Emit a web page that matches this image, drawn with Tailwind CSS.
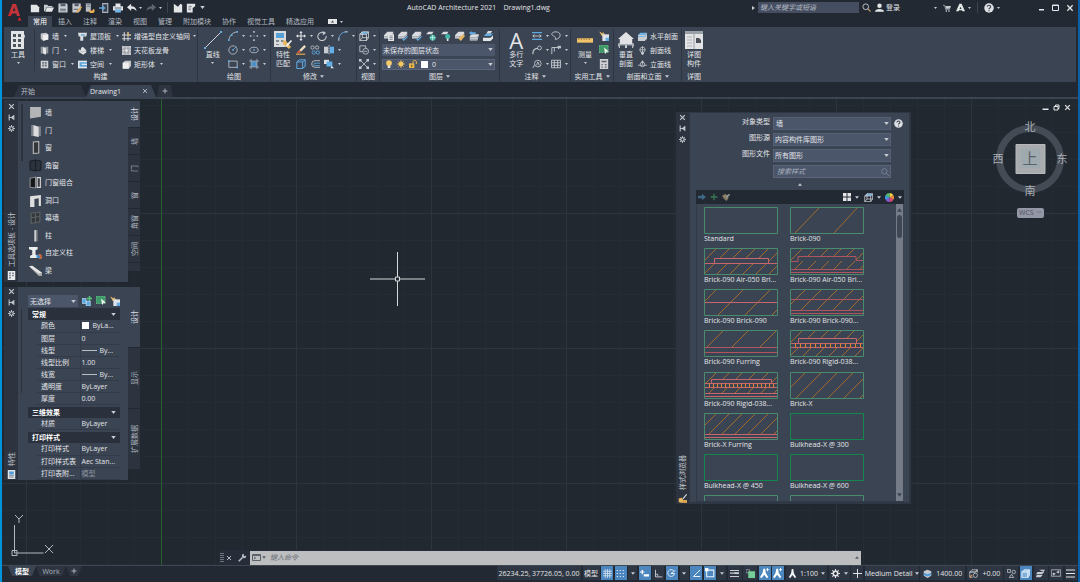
<!DOCTYPE html>
<html lang="zh-CN">
<head>
  <meta charset="UTF-8" />
  <meta name="viewport" content="width=device-width, initial-scale=1.0" />
  <title>AutoCAD Architecture 2021 - Drawing1.dwg</title>
  <script src="https://cdn.jsdelivr.net/npm/@tailwindcss/browser@4"></script>
</head>
<body class="h-screen flex flex-col overflow-hidden bg-[#222933] border-l-2 border-r-2 border-l-[#0094dc] border-r-[#0b5fa5] text-[7px] leading-[9px] text-[#e3e5e8] font-['Open_Sans','Noto_Sans_CJK_SC',sans-serif]">

  <!-- Icon sprite (kept rendered at zero size so the hatch patterns stay usable) -->
  <svg class="absolute w-0 h-0" aria-hidden="true">
    <symbol id="caret" viewBox="0 0 6 4"><path d="M0 0h6L3 4z" fill="#c9cdd3"/></symbol>
    <symbol id="x" viewBox="0 0 12 12"><path d="M2 2l8 8M10 2l-8 8" stroke="currentColor" stroke-width="2"/></symbol>
    <symbol id="plus" viewBox="0 0 12 12"><path d="M6 1v10M1 6h10" stroke="currentColor" stroke-width="2"/></symbol>
    <symbol id="pin" viewBox="0 0 12 12"><path d="M2 1v10M2 6h4M10 3L6 6l4 3z" stroke="currentColor" stroke-width="1.8" fill="currentColor"/></symbol>
    <symbol id="gear" viewBox="0 0 12 12"><path d="M6 0v12M0 6h12M1.8 1.8l8.4 8.4M10.2 1.8l-8.4 8.4" stroke="currentColor" stroke-width="1.6"/><circle cx="6" cy="6" r="3" fill="#2d3440" stroke="currentColor" stroke-width="2"/></symbol>
    <symbol id="help" viewBox="0 0 12 12"><circle cx="6" cy="6" r="5.7" fill="#dfe1e4"/><path d="M4 4.6C4 2 8 2 8 4.6 8 6 6 6 6 7.4M6 8.6v1.4" stroke="#3b4453" stroke-width="1.4" fill="none"/></symbol>
    <symbol id="search" viewBox="0 0 12 12"><circle cx="5" cy="5" r="3.8" fill="none" stroke="currentColor" stroke-width="1.2"/><path d="M8 8l3.4 3.4" stroke="#c9a36a" stroke-width="1.5"/></symbol>
    <symbol id="new" viewBox="0 0 12 12"><path d="M1 2h7l3 3v6H1z" fill="#e3e5e7"/></symbol>
    <symbol id="open" viewBox="0 0 12 12"><path d="M0 2h4l1 1.5h5V5H3L1 10H0z" fill="#c9ccd0"/><path d="M3.4 5.5H12L9.6 10.5H1.4z" fill="#e3e5e7"/></symbol>
    <symbol id="save" viewBox="0 0 12 12"><path d="M.5.5h10L11.500 2v9.500H.5z" fill="#c8ccd0"/><path d="M3 .5h6V4H3zM2.500 7h7v1h-7zM2.500 9h7v1h-7z" fill="#565f6d"/></symbol>
    <symbol id="saveas" viewBox="0 0 12 12"><path d="M.5.5h10v8L8 11.500H.5z" fill="#c8ccd0"/><path d="M3 .5h5V4H3zM2 7h5v1H2z" fill="#565f6d"/><path d="M11 4l1 1.500L7 11l-2 .6.6-2z" fill="#e2a54d"/></symbol>
    <symbol id="webopen" viewBox="0 0 12 12"><path d="M1 .5h6v10H1z" fill="#b8bcc2"/><path d="M2 2h4M2 4h4" stroke="#6b7380"/><path d="M4 9h5l1-2 1.500 1v2.500L10 12H6z" fill="#e7ae54"/></symbol>
    <symbol id="phone" viewBox="0 0 12 12"><path d="M4.500 .7h6v10.600h-6z" fill="#38424f" stroke="#a9b4c1" stroke-width="1.400"/><path d="M0 5h4V3l4 3-4 3V7H0z" fill="#5fa7dc"/></symbol>
    <symbol id="print" viewBox="0 0 12 12"><path d="M3 .5h6V4H3zM0 4h12v5H0z" fill="#e3e5e7"/><path d="M2 6h8" stroke="#4a535f"/><path d="M2.500 7.500h7v4h-7z" fill="#73b4e4"/></symbol>
    <symbol id="undo" viewBox="0 0 12 12"><path d="M0 5l5-4v3c4 0 6 2 6.500 6C9.500 7.500 8 7 5 7v2.500z" fill="currentColor"/></symbol>
    <symbol id="flagdoc" viewBox="0 0 12 12"><path d="M1 1l5 3.500L9 1l2 1v9.500H1z" fill="#e3e5e7"/></symbol>
    <symbol id="sheet" viewBox="0 0 12 12"><path d="M1 1h10v3L8 6v5.500H1z" fill="#e3e5e7"/><path d="M3 4h4M3 6h3M3 8h3" stroke="#6a7380"/></symbol>
    <symbol id="user" viewBox="0 0 12 12"><circle cx="6" cy="3.500" r="3" fill="#e3e5e7"/><path d="M0 11.500C0 7 12 7 12 11.500z" fill="#e3e5e7"/></symbol>
    <symbol id="cart" viewBox="0 0 12 12"><path d="M0 2h2.500L4 8h6" stroke="#c6cace" fill="none"/><path d="M3.500 3H12l-1.500 4h-6z" fill="#c6cace"/><path d="M4 9.500h2v2H4zM8 9.500h2v2H8z" fill="#c6cace"/></symbol>
    <symbol id="adsk" viewBox="0 0 12 12"><path d="M4.500 1h3L12 11H8.500L6 5 3.500 11H0zM3 8h6v1.500H3z" fill="#e3e5e7"/></symbol>

    <symbol id="toolbox" viewBox="0 0 14 18"><path d="M0 0h13v3l1 2-1 3v10H0z" fill="#e3e4e5"/><path d="M2 3h3v3H2zM7 3h3v3H7zM2 8h3v3H2zM7 8h3v3H7zM2 13h3v3H2zM7 13h3v3H7z" fill="#4b535f"/></symbol>
    <symbol id="wall" viewBox="0 0 12 12"><path d="M1 2l7-1 3 2v7l-7 1.500L1 9z" fill="#c4c6c9"/><path d="M4 4l7-1v7l-7 1.500z" fill="#efefef"/></symbol>
    <symbol id="door" viewBox="0 0 12 12"><path d="M1 1h10v9H7V2.500H4V10H1z" fill="#8f969e"/><path d="M4 1.500l4 1.500v8.500L4 10z" fill="#e4e4e4"/></symbol>
    <symbol id="window" viewBox="0 0 12 12"><path d="M1 1h10v10H1z" fill="#d0d2d5"/><path d="M3 2.500h2.500V5H3zM6.500 2.500H9V5H6.500zM3 6h2.500v2.500H3zM6.500 6H9v2.500H6.500z" fill="#68717e"/></symbol>
    <symbol id="palette" viewBox="0 0 12 12"><path d="M1 0h10v12H1z" fill="#e9eaec"/><path d="M3 2h2v2H3zM7 2h2v2H7zM3 5h2v2H3zM7 5h2v2H7zM3 8h2v2H3z" fill="#68717e"/></symbol>
    <symbol id="props" viewBox="0 0 12 12"><path d="M1 0h10v12H1z" fill="#dfe1e4"/><path d="M3 2h6v4H3z" fill="#4c9bd8"/><path d="M3 7.500h6M3 9.500h6" stroke="#68717e"/></symbol>
    <symbol id="roof" viewBox="0 0 12 12"><path d="M0 1h12l-1 5H7v5.500H3V6H1z" fill="#dcdde0"/><path d="M4 3h5v2H4z" fill="#63a8da"/></symbol>
    <symbol id="stair" viewBox="0 0 12 12"><path d="M1 5h3V2.500L6.500 1 11 5.500v3L7 11.500 1 8z" fill="#e0e1e3"/><path d="M1 5l5 3 5-2" stroke="#a7acb3" fill="none"/></symbol>
    <symbol id="space" viewBox="0 0 12 12"><path d="M0 1h12v10H0z" fill="#5ba6e0"/><path d="M0 1h12v2H0zM0 9h12v2H0zM0 3h2v6H0zM5 5h7v1.500H5z" fill="#e2e4e6"/></symbol>
    <symbol id="grid3" viewBox="0 0 12 12"><path d="M3 0v12M8 0v12M0 4h12M0 9h12" stroke="#d8dadd" stroke-width="1.300"/><path d="M8 0v4h4" stroke="#e2b35c" stroke-width="1.400" fill="none"/></symbol>
    <symbol id="ceiling" viewBox="0 0 12 12"><path d="M0 0h12v12H0z" fill="#c6c8cb"/><path d="M4 0v12M8 0v12M0 4h12M0 8h12" stroke="#8d939b"/><path d="M4.500 4.500h3v3h-3z" fill="#eee"/></symbol>
    <symbol id="box" viewBox="0 0 12 12"><path d="M1 3.500L4 1h8v7l-3 3.500H1z" fill="#c4c6c9"/><path d="M1 3.500h8v8H1z" fill="#f0f0f0"/></symbol>

    <symbol id="line" viewBox="0 0 18 18"><path d="M1 17L17 1" stroke="#d1d4d8"/><path d="M0 16h2v2H0zM16 0h2v2h-2z" fill="#62aee6"/></symbol>
    <symbol id="arc" viewBox="0 0 12 12"><path d="M1 11C2 5 5 2 11 1" stroke="#bfc4ca" fill="none"/><path d="M0 10h2v2H0zM10 0h2v2h-2zM3.500 4h2v2h-2z" fill="#62aee6"/></symbol>
    <symbol id="circle" viewBox="0 0 12 12"><circle cx="6" cy="6" r="5" stroke="#bfc4ca" fill="none"/><path d="M6 6l4-4" stroke="#62aee6"/><path d="M5 5h2v2H5z" fill="#62aee6"/></symbol>
    <symbol id="rect" viewBox="0 0 12 12"><path d="M1 2.500h10v7.500H1z" stroke="#bfc4ca" fill="none"/><path d="M0 1.500h2v2H0zM10 9h2v2h-2z" fill="#62aee6"/></symbol>
    <symbol id="points" viewBox="0 0 12 12"><path d="M5 0h2v2H5zM1 5h2v2H1zM9 5h2v2H9zM5 10h2v2H5zM5.500 5.500h1v1h-1z" fill="#b5bbc3"/></symbol>
    <symbol id="ellipse" viewBox="0 0 12 12"><ellipse cx="6" cy="6" rx="5" ry="3.300" stroke="#bfc4ca" fill="none"/><path d="M5 5h2v2H5z" fill="#62aee6"/></symbol>
    <symbol id="hatch" viewBox="0 0 12 12"><path d="M2.500 2.500h7v7h-7z" fill="#4d91c8"/><path d="M2.500 0v12M9.500 0v12M0 2.500h12M0 9.500h12" stroke="#a7b0bb"/></symbol>
    <symbol id="match" viewBox="0 0 18 18"><path d="M0 0h12v16H0z" fill="#dadbdd"/><path d="M2 2h8v5H2z" fill="#56a0d8"/><path d="M2 9h3v2H2zM2 13h3v1H2zM7 9h3v2H7z" fill="#7f8791"/><path d="M9 9l3 1 5 6-2 2-6-5z" fill="#e6b65f"/><path d="M12 14l5-5 1 1-5 6z" fill="#f2f2f2"/></symbol>
    <symbol id="move" viewBox="0 0 12 12"><path d="M6 1v10M1 6h10" stroke="#e1e3e6" stroke-width="1.300"/><path d="M6 0l2 2.500H4zM6 12l2-2.500H4zM0 6l2.500-2v4zM12 6L9.500 4v4z" fill="#e1e3e6"/></symbol>
    <symbol id="rotate" viewBox="0 0 12 12"><path d="M9 2.500A5 5 0 1 0 11 6" stroke="#c7cbd1" stroke-width="1.300" fill="none"/><path d="M7 0l4 2.500L7 5z" fill="#c7cbd1"/></symbol>
    <symbol id="fillet" viewBox="0 0 12 12"><path d="M1 11C1 5 4 1 11 1" stroke="#62aee6" fill="none"/><path d="M8 1h4M1 8v4" stroke="#c7cbd1"/></symbol>
    <symbol id="erase" viewBox="0 0 12 12"><path d="M10 0l2 2-6 6-2-2z" fill="#e9dcc1"/><path d="M4 6l2 2-3 2-2-1z" fill="#e05c44"/><path d="M0 11h11" stroke="#e2a54d" stroke-width="1.500"/></symbol>
    <symbol id="copy" viewBox="0 0 12 12"><circle cx="3" cy="3" r="2" stroke="#c0c5cb" fill="none"/><circle cx="8.500" cy="3" r="2" stroke="#c0c5cb" fill="none"/><circle cx="4.500" cy="9" r="2" stroke="#62aee6" fill="none"/><circle cx="9.500" cy="9" r="2" stroke="#62aee6" fill="none"/></symbol>
    <symbol id="mirror" viewBox="0 0 12 12"><path d="M0 2h5v8H0z" fill="#c9ccd1"/><path d="M7 2h5v8H7z" fill="#62aee6"/><path d="M6 0v12" stroke="#dfe1e4" stroke-dasharray="2 1"/></symbol>
    <symbol id="stretch" viewBox="0 0 12 12"><path d="M1 3.500h7v8H1zM4 1h7v8l-3 2M1 3.500L4 1M8 3.500L11 1" stroke="#62aee6" fill="none" stroke-width="1.200"/></symbol>
    <symbol id="offset" viewBox="0 0 12 12"><path d="M12 2H6a4 4 0 0 0 0 8h6" stroke="#c7cbd1" fill="none"/><path d="M12 5H6a1.500 1.500 0 0 0 0 3h6" stroke="#62aee6" fill="none"/></symbol>
    <symbol id="scale" viewBox="0 0 12 12"><path d="M0 1h6v5H0z" fill="#dfe1e4"/><path d="M3 3h7v6H3z" fill="#62aee6"/><path d="M9 8l3 3H8z" fill="#dfe1e4"/></symbol>
    <symbol id="cube" viewBox="0 0 12 12"><path d="M1 4l3-3h7.500L9 4z" fill="#5ba6de"/><path d="M1 4h8v7.500H1zM1 4l3-3h7.500v7L9 11.500M9 4l2.500-3M4 1v7h7.500M4 8l-3 3.500" stroke="#d3d6da" fill="none"/></symbol>
    <symbol id="shapes" viewBox="0 0 12 12"><path d="M1 1h7v7H1z" stroke="#c7cbd1" fill="none"/><circle cx="8" cy="7.500" r="3.500" stroke="#c7cbd1" fill="#3b4453"/><path d="M6 7.500h4" stroke="#c7cbd1"/></symbol>
    <symbol id="nodes" viewBox="0 0 12 12"><path d="M2 2l8 8M10 2l-8 8" stroke="#c7cbd1"/><path d="M0 0h3v3H0zM9 0h3v3H9zM0 9h3v3H0zM9 9h3v3H9z" fill="#c7cbd1"/></symbol>
    <symbol id="layer" viewBox="0 0 12 12"><path d="M0 5l4-4h7l-3 4zM0 5v4h7l4-4V1L8 5z" fill="#dadcdf"/><path d="M0 7h8l3-4" stroke="#8d959f" fill="none"/></symbol>
    <symbol id="lyprops" viewBox="0 0 12 12"><use href="#layer"/><path d="M5 4h7v8H5z" fill="#e9eaec"/><path d="M6.500 6h4M6.500 8h4M6.500 10h4" stroke="#6d7682"/></symbol>
    <symbol id="lycur" viewBox="0 0 12 12"><use href="#layer"/><path d="M5 10l2 2 5-5-1-1-4 4-1-1z" fill="#62aee6"/></symbol>
    <symbol id="lyfrz" viewBox="0 0 12 12"><path d="M0 4l3-3h6L7 4z" fill="#dadcdf"/><circle cx="8" cy="8" r="3.500" fill="#43b7a5"/><path d="M8 4.500v7M4.500 8h7" stroke="#cdeee8"/></symbol>
    <symbol id="lyoff" viewBox="0 0 12 12"><path d="M0 4l3-3h6L7 4z" fill="#dadcdf"/><circle cx="8" cy="6.500" r="3" fill="#43b7a5"/><path d="M7 9h2v3H7z" fill="#e3e5e7"/></symbol>
    <symbol id="lyiso" viewBox="0 0 12 12"><use href="#layer"/><path d="M4 9l6-5 2 2-5 6z" fill="#e6b65f"/></symbol>
    <symbol id="lyprev" viewBox="0 0 12 12"><path d="M1 6l2-2h9l-2 7.500H1z" fill="#dadcdf"/><path d="M1 8h9l1-2M1 10h9" stroke="#8d959f" fill="none"/><path d="M0 2.500L3 0v1.500h5v2H3V5z" fill="#62aee6"/></symbol>
    <symbol id="lystack" viewBox="0 0 12 12"><path d="M0 8h9l3-3v4l-3 3H0z" fill="#e3e5e7"/><path d="M1 6l3-3h8L9 6z" fill="#62aee6"/><path d="M4 3l2-3h5l-2 3z" fill="#dadcdf"/></symbol>
    <symbol id="bulb" viewBox="0 0 12 12"><circle cx="6" cy="4.500" r="4.300" fill="#f5c964"/><path d="M4 8h4v4H4z" fill="#e9e4d6"/></symbol>
    <symbol id="sun" viewBox="0 0 12 12"><path d="M6 0v12M0 6h12M2 2l8 8M10 2l-8 8" stroke="#edb94e" stroke-width="1.300"/><circle cx="6" cy="6" r="3.600" fill="#f5c964"/></symbol>
    <symbol id="lock" viewBox="0 0 12 12"><path d="M0 5h8v7H0z" fill="#edb94e"/><path d="M6 5V2.500C6 0 11 0 11 2.500V6" stroke="#edb94e" stroke-width="1.500" fill="none"/><path d="M3 7h2v3H3z" fill="#6f5a2c"/></symbol>
    <symbol id="dim" viewBox="0 0 12 12"><path d="M0 2h12M0 10h12" stroke="#5ea9df" stroke-width="1.500"/><path d="M1 6h10M3 4L1 6l2 2M9 4l2 2-2 2" stroke="#d6d9dd" fill="none"/></symbol>
    <symbol id="leader" viewBox="0 0 12 12"><path d="M1 11C1 6 3 4 7 4" stroke="#c9cdd2" fill="none" stroke-width="1.300"/><circle cx="9" cy="3.500" r="2.300" stroke="#c9cdd2" fill="none"/></symbol>
    <symbol id="tag" viewBox="0 0 12 12"><path d="M1 11l2-4" stroke="#c9cdd2"/><circle cx="7" cy="5.500" r="4" stroke="#c9cdd2" fill="none"/><path d="M5.500 7.500L7 3.500l1.500 4" stroke="#c9cdd2" fill="none"/></symbol>
    <symbol id="cloud" viewBox="0 0 12 12"><path d="M2 2c3-2 9-1 9 3 0 3-3 5-6 5 1-2 0-3-2-4C1 5 0 3 2 2z" stroke="#b9bfc7" fill="none" stroke-width="1.200"/></symbol>
    <symbol id="elev" viewBox="0 0 12 12"><path d="M1 11V3h10M4 3v5M9 1v4" stroke="#b9bfc7" fill="none" stroke-width="1.200"/><path d="M8 1h4v3H8z" fill="#b9bfc7"/></symbol>
    <symbol id="table" viewBox="0 0 12 12"><path d="M.5 1.500h11v9H.5zM.5 4.500h11M.5 7.500h11M4 1.500v9M8 1.500v9" stroke="#d3d6da" fill="none"/></symbol>
    <symbol id="ruler" viewBox="0 0 18 18"><path d="M0 7h18v5H0z" fill="#f0c46a"/><path d="M2 7v2M5 7v2M8 7v2M11 7v2M14 7v2" stroke="#98753a"/></symbol>
    <symbol id="paste" viewBox="0 0 12 12"><path d="M1 1l3 5 1-4 2 3" fill="#f0c46a" stroke="#f0c46a"/><path d="M4 4h8v8H4z" fill="#dfe2e6"/><path d="M8 8h4v4H8z" fill="#62aee6"/></symbol>
    <symbol id="qsel" viewBox="0 0 12 12"><path d="M0 0h11v9H0z" fill="#3d9a68"/><path d="M0 0h11v9H0z" fill="none" stroke="#8bd0a5" stroke-dasharray="1 1"/><path d="M6 3l6 5H9l-1.500 3z" fill="#f4f4f4"/></symbol>
    <symbol id="calc" viewBox="0 0 12 12"><path d="M1 0h10v12H1z" fill="#cfd1d4"/><path d="M3 2h6v2H3zM3 6h1.500v1.500H3zM7 6h2v1.500H7zM3 9h1.500v1.500H3zM7 9h2v1.500H7z" fill="#59626e"/></symbol>
    <symbol id="house" viewBox="0 0 18 18"><path d="M9 0l9 8h-2v5h2v3h-1v2h-1v-3h-6v3H8v-3H2v3H1v-2H0v-3h2V8H0z" fill="#e1e2e4"/><path d="M0 14.500h18" stroke="#7b838e"/></symbol>
    <symbol id="hsec" viewBox="0 0 12 12"><path d="M0 4l3-3h9L9 4z" fill="#6bb3e6"/><path d="M0 4h9v8H0zM9 4l3-3v8l-3 3z" fill="#c9ccd0"/><path d="M0 6h9l3-3" stroke="#62aee6" fill="none"/></symbol>
    <symbol id="secline" viewBox="0 0 12 12"><circle cx="6" cy="5" r="3.500" stroke="#c9cdd2" fill="none"/><path d="M6 0v10M2 5h8M4 9h4l-2 3z" stroke="#c9cdd2" fill="#c9cdd2"/></symbol>
    <symbol id="elevline" viewBox="0 0 12 12"><circle cx="6" cy="6" r="3" stroke="#c9cdd2" fill="none"/><path d="M0 7h12M6 1v5M4 4l2-3 2 3" stroke="#c9cdd2" fill="none"/></symbol>
    <symbol id="detail" viewBox="0 0 18 18"><path d="M0 0h18v18H0z" fill="#e2e3e4"/><path d="M0 0h18v3H0z" fill="#9aa0a7"/><path d="M9 3v15" stroke="#9aa0a7"/><path d="M2 6h5M2 9h5M2 12h5M2 15h5" stroke="#b1b5ba"/><path d="M11 7h3l2 2v3h-5z" fill="#4b5058"/></symbol>
    <symbol id="addsel" viewBox="0 0 12 12"><path d="M0 3h5v6H0zM5 6h5v6H5z" fill="#5ea9df" stroke="#cfe4f4" stroke-width=".7"/><path d="M9 0v6M6 3h6" stroke="#57c77c" stroke-width="1.800"/></symbol>
    <symbol id="wrench" viewBox="0 0 12 12"><path d="M1 11l5-5" stroke="currentColor" stroke-width="2.200"/><path d="M11 3.500A3 3 0 1 1 7.500 1L8 4z" fill="currentColor"/></symbol>
    <symbol id="arrow" viewBox="0 0 12 12"><path d="M0 4h6V1l6 5-6 5V8H0z" fill="#3f6788"/></symbol>
    <symbol id="brush" viewBox="0 0 12 12"><path d="M0 4l5-3 5 6-3 5-4-3z" fill="#857a61"/><path d="M5 5l6-4 1 2-5 5z" fill="#9a9a94"/></symbol>
    <symbol id="broom" viewBox="0 0 12 12"><path d="M11 0l1 1-5 6-1-1z" fill="#e3e5e7"/><path d="M1 6l4-1 3 4-2 3-5-1z" fill="#e6b65f"/><path d="M7 8h5v4H7z" fill="#d9a24e"/></symbol>
    <symbol id="tiles" viewBox="0 0 12 12"><path d="M0 0h5.300v5.300H0zM6.700 0H12v5.300H6.700zM0 6.700h5.300V12H0zM6.700 6.700H12V12H6.700z" fill="#e3e5e7"/></symbol>
    <symbol id="wheel" viewBox="0 0 12 12"><path d="M6 6V0a6 6 0 0 1 5.200 3z" fill="#f3d64b"/><path d="M6 6l5.200-3a6 6 0 0 1 0 6z" fill="#ee8a3c"/><path d="M6 6l5.200 3A6 6 0 0 1 6 12z" fill="#e2487f"/><path d="M6 6v6A6 6 0 0 1 .8 9z" fill="#8a5bd6"/><path d="M6 6L.8 9a6 6 0 0 1 0-6z" fill="#3fa0ea"/><path d="M6 6L.8 3A6 6 0 0 1 6 0z" fill="#56c46c"/></symbol>

    <symbol id="hash" viewBox="0 0 12 12"><path d="M3 0v12M6 0v12M9 0v12M0 3h12M0 6h12M0 9h12" stroke="#e9f0f7" stroke-width=".9"/></symbol>
    <symbol id="dots" viewBox="0 0 12 12"><path d="M1 2h10M1 6h10M1 10h10" stroke="#e9f0f7" stroke-width="1.500" stroke-dasharray="1.500 2.500"/></symbol>
    <symbol id="dyn" viewBox="0 0 12 12"><path d="M0 4h6M3 1v6" stroke="#fff" stroke-width="1.600"/><path d="M5 7h7v3H5z" fill="#fff"/></symbol>
    <symbol id="ortho" viewBox="0 0 12 12"><path d="M2 1v9.500h9M2 7h3v3" stroke="#c9cdd2" fill="none" stroke-width="1.200"/></symbol>
    <symbol id="polar" viewBox="0 0 12 12"><path d="M9 2.500A4.500 4.500 0 1 0 10 6H5M5 6l6-4" stroke="#eaf2f9" fill="none" stroke-width="1.200"/></symbol>
    <symbol id="otrack" viewBox="0 0 12 12"><path d="M11 1L2 10h9" stroke="#eaf2f9" fill="none" stroke-width="1.300"/></symbol>
    <symbol id="osnap" viewBox="0 0 12 12"><path d="M2 2.500h8.500v8H2z" stroke="#eaf2f9" fill="none" stroke-width="1.300"/><path d="M0 0h4v4H0z" fill="#fff"/></symbol>
    <symbol id="lwt" viewBox="0 0 12 12"><path d="M0 2h12M0 5.500h8M0 10h12" stroke="#c9cdd2" stroke-width="1.500"/><path d="M6 5.500h6" stroke="#c9cdd2" stroke-width="2.500"/></symbol>
    <symbol id="cycle" viewBox="0 0 12 12"><path d="M0 1h5v4H0z" fill="none" stroke="#9aa5b1"/><path d="M3 3h9v9H3z" fill="#74cf97"/></symbol>
    <symbol id="ann" viewBox="0 0 12 12"><path d="M5 0h2l1 6 3 5-2 1-3-4-3 4-2-1 3-5z" fill="#f1f4f7"/></symbol>
    <symbol id="annstar" viewBox="0 0 12 12"><path d="M4 1h2l1 5 3 5-2 1-3-4-3 4-2-1 3-5z" fill="#fff"/><path d="M9 0v4M7 2h4" stroke="#fff"/></symbol>
    <symbol id="db" viewBox="0 0 12 12"><path d="M1 3l5-2 5 2v6l-5 3-5-3z" fill="#c7ccd2"/><path d="M1 5l5 2 5-2v3l-5 2-5-2z" fill="#4c9bd8"/></symbol>
    <symbol id="surf" viewBox="0 0 12 12"><path d="M1 4l3-3h7L9 4zM9 4h-8v7h4M9 4l2-3v4" stroke="#c9cdd2" fill="none"/><circle cx="8.500" cy="8.500" r="2.800" stroke="#c9cdd2" fill="none"/><path d="M1 11l3-3" stroke="#e08a4d" stroke-width="1.500"/></symbol>
    <symbol id="filter" viewBox="0 0 12 12"><circle cx="9" cy="4" r="2.300" stroke="#c9cdd2" fill="none"/><path d="M.5.5h4v4h-4zM3 11.500h6L6 7z" stroke="#c9cdd2" fill="none"/></symbol>
    <symbol id="solid" viewBox="0 0 12 12"><path d="M1 4h8v7.500H1zM1 4l3-3h7.500v7L9 11.500M9 4l2.500-3" fill="#a9cdec" stroke="#eef5fb"/><path d="M3 5v6M5 5v6M7 5v6" stroke="#5b93c6"/></symbol>
    <symbol id="iso" viewBox="0 0 12 12"><path d="M2 4h9L8 7H0zM4 1h8l-2 3M1 8h8l-3 3H0z" fill="#c9cdd2"/></symbol>
    <symbol id="full" viewBox="0 0 14 12"><path d="M.5 1.500h13v9H.5z" stroke="#c9cdd2" fill="none"/><path d="M8 5l3-2v3zM6 7L3 9V6z" fill="#c9cdd2" stroke="#c9cdd2"/></symbol>

    <!-- wall hatches -->
    <pattern id="h13" width="13" height="13" patternUnits="userSpaceOnUse"><path d="M-1 14L14 -1M-1 1L1 -1M12 14L14 12" stroke="#a3692f"/></pattern>
    <pattern id="h16" width="16" height="16" patternUnits="userSpaceOnUse"><path d="M-1 17L17 -1M-1 1L1 -1M15 17L17 15" stroke="#a3692f"/></pattern>
    <pattern id="h27" width="27" height="27" patternUnits="userSpaceOnUse" x="13"><path d="M-1 28L28 -1M-1 1L1 -1M26 28L28 26" stroke="#a3692f"/></pattern>
    <symbol id="thumb" viewBox="0 0 74 27"><path d="M.5.5h73v26H.5z" fill="none" stroke="#4a8a6d"/></symbol>
    <symbol id="thumbg" viewBox="0 0 74 27"><path d="M.5.5h73v26H.5z" fill="none" stroke="#14874d"/></symbol>
  </svg>

  <!-- Title bar and ribbon tabs -->
  <header class="flex h-[27px] shrink-0">
    <button aria-label="应用程序菜单" class="w-[26px] flex justify-center pt-[3px]">
      <svg class="w-[14px] h-[18px]" viewBox="0 0 14 18"><path d="M4.500 1h3.500l4 12H9l-.9-2.600H4L3 13H0zM4.800 8h2.600L6.200 4z" fill="#c3343b"/><path d="M0 13l3-4v4zM9.500 17.500h4L11.500 14z" fill="#d3222c"/></svg>
    </button>
    <div class="flex-1 flex flex-col">
      <div class="flex items-center h-[15px]">
        <div class="flex items-center justify-between w-[107px] ml-[2px]">
          <button aria-label="新建"><svg class="size-[10px]"><use href="#new"/></svg></button>
          <button aria-label="打开"><svg class="size-[10px]"><use href="#open"/></svg></button>
          <button aria-label="保存"><svg class="size-[10px]"><use href="#save"/></svg></button>
          <button aria-label="另存为"><svg class="size-[10px]"><use href="#saveas"/></svg></button>
          <button aria-label="从 Web 打开"><svg class="size-[10px]"><use href="#webopen"/></svg></button>
          <button aria-label="保存到移动设备"><svg class="size-[10px]"><use href="#phone"/></svg></button>
          <button aria-label="打印"><svg class="size-[10px]"><use href="#print"/></svg></button>
          <button aria-label="放弃"><svg class="size-[10px]"><use href="#undo"/></svg></button>
        </div>
        <svg class="w-[3px] h-[2px] ml-[2px]"><use href="#caret"/></svg>
        <button aria-label="重做" class="ml-[4px] text-[#5d6672]"><svg class="size-[10px] -scale-x-100"><use href="#undo"/></svg></button>
        <svg class="w-[3px] h-[2px] ml-[3px]"><use href="#caret"/></svg>
        <span class="w-px h-[11px] bg-[#3c4552] ml-[5px]"></span>
        <button aria-label="项目浏览器" class="ml-[5px]"><svg class="size-[10px]"><use href="#flagdoc"/></svg></button>
        <button aria-label="图纸集" class="ml-[3px]"><svg class="size-[10px]"><use href="#sheet"/></svg></button>
        <svg class="w-[5px] h-[3px] ml-[4px]"><use href="#caret"/></svg>
        <h1 class="flex-1 text-center whitespace-pre">AutoCAD Architecture 2021    Drawing1.dwg</h1>
        <svg class="w-[3px] h-[4px] mr-[3px]" viewBox="0 0 3 4"><path d="M0 0v4l3-2z" fill="#c9cdd3"/></svg>
        <input type="text" aria-label="搜索" placeholder="键入关键字或短语" class="w-[101px] h-[11px] bg-[#454e60] px-[2px] italic placeholder:text-[#b4bac4] outline-none" />
        <button aria-label="搜索" class="ml-[3px] text-[#c9cdd3]"><svg class="size-[9px]"><use href="#search"/></svg></button>
        <button class="flex items-center gap-[2px] ml-[4px]"><svg class="size-[9px]"><use href="#user"/></svg>登录</button>
        <svg class="w-[3px] h-[2px] ml-[34px]"><use href="#caret"/></svg>
        <button aria-label="应用商店" class="ml-[6px]"><svg class="size-[8px]"><use href="#cart"/></svg></button>
        <button aria-label="Autodesk" class="ml-[5px]"><svg class="size-[9px]"><use href="#adsk"/></svg></button>
        <svg class="w-[3px] h-[2px] ml-[3px]"><use href="#caret"/></svg>
        <span class="w-px h-[11px] bg-[#3c4552] ml-[6px]"></span>
        <button aria-label="帮助" class="ml-[6px]"><svg class="size-[10px]"><use href="#help"/></svg></button>
        <svg class="w-[3px] h-[2px] ml-[3px]"><use href="#caret"/></svg>
        <div class="flex items-center gap-[7px] ml-[38px] mr-[4px] text-[#e3e5e7]">
          <button aria-label="最小化"><svg class="size-[7px]" viewBox="0 0 7 7"><path d="M1 5h5v1.500H1z" fill="currentColor"/></svg></button>
          <button aria-label="最大化"><svg class="size-[7px]" viewBox="0 0 7 7"><path d="M.5 1h6v5.500h-6zM.5 1.500h6" stroke="currentColor" fill="none"/></svg></button>
          <button aria-label="关闭"><svg class="size-[8px]"><use href="#x"/></svg></button>
        </div>
      </div>
      <nav class="flex items-end gap-px h-[12px] text-[#b3b9c1]">
        <button class="h-[11px] px-[5px] bg-[#3b4453] text-white">常用</button>
        <button class="h-[11px] px-[5px]">插入</button>
        <button class="h-[11px] px-[5px]">注释</button>
        <button class="h-[11px] px-[5px]">渲染</button>
        <button class="h-[11px] px-[5px]">视图</button>
        <button class="h-[11px] px-[5px]">管理</button>
        <button class="h-[11px] px-[5px]">附加模块</button>
        <button class="h-[11px] px-[5px]">协作</button>
        <button class="h-[11px] px-[5px]">视觉工具</button>
        <button class="h-[11px] px-[5px]">精选应用</button>
        <button aria-label="功能区显示" class="h-[11px] px-[4px] flex items-center gap-[3px] ml-[4px]">
          <svg class="w-[9px] h-[5px]" viewBox="0 0 9 5"><path d="M0 0h9v5H0z" fill="#e3e5e7"/><path d="M3 3.500h3L4.500 1.500z" fill="#3b4453"/></svg>
          <svg class="w-[3px] h-[2px]"><use href="#caret"/></svg>
        </button>
      </nav>
    </div>
  </header>

  <!-- Ribbon -->
  <section class="flex h-[55px] shrink-0 mx-[2px] bg-[#3b4453] pt-[2px]">
    <!-- 构建 -->
    <div class="w-[194px] shrink-0 border-r border-[#2e3642] flex flex-col">
      <div class="flex h-[42px]">
        <button class="w-[28px] flex flex-col items-center pt-[2px]">
          <svg class="w-[14px] h-[18px]"><use href="#toolbox"/></svg><span class="mt-px">工具</span>
          <svg class="w-[3px] h-[2px] mt-[3px]"><use href="#caret"/></svg>
        </button>
        <div class="w-[6px] border-l border-[#2e3642] ml-[2px]"></div>
        <div class="w-[38px] grid grid-rows-3">
          <button class="flex items-center gap-[3px]"><svg class="size-[9px]"><use href="#wall"/></svg>墙<svg class="w-[3px] h-[2px] ml-[2px]"><use href="#caret"/></svg></button>
          <button class="flex items-center gap-[3px]"><svg class="size-[9px]"><use href="#door"/></svg>门<svg class="w-[3px] h-[2px] ml-[2px]"><use href="#caret"/></svg></button>
          <button class="flex items-center gap-[3px]"><svg class="size-[9px]"><use href="#window"/></svg>窗口<svg class="w-[3px] h-[2px] ml-[2px]"><use href="#caret"/></svg></button>
        </div>
        <div class="w-[44px] grid grid-rows-3">
          <button class="flex items-center gap-[3px]"><svg class="size-[9px]"><use href="#roof"/></svg>屋顶板<svg class="w-[3px] h-[2px] ml-[2px]"><use href="#caret"/></svg></button>
          <button class="flex items-center gap-[3px]"><svg class="size-[9px]"><use href="#stair"/></svg>楼梯<svg class="w-[3px] h-[2px] ml-[2px]"><use href="#caret"/></svg></button>
          <button class="flex items-center gap-[3px]"><svg class="size-[9px]"><use href="#space"/></svg>空间<svg class="w-[3px] h-[2px] ml-[2px]"><use href="#caret"/></svg></button>
        </div>
        <div class="flex-1 grid grid-rows-3 whitespace-nowrap">
          <button class="flex items-center gap-[3px]"><svg class="size-[9px]"><use href="#grid3"/></svg>增强型自定义轴网<svg class="w-[3px] h-[2px]"><use href="#caret"/></svg></button>
          <button class="flex items-center gap-[3px]"><svg class="size-[9px]"><use href="#ceiling"/></svg>天花板龙骨</button>
          <button class="flex items-center gap-[3px]"><svg class="size-[9px]"><use href="#box"/></svg>矩形体<svg class="w-[3px] h-[2px] ml-[2px]"><use href="#caret"/></svg></button>
        </div>
      </div>
      <div class="h-[11px] leading-[11px] text-center">构建</div>
    </div>

    <!-- 绘图 -->
    <div class="w-[73px] shrink-0 border-r border-[#2e3642] flex flex-col">
      <div class="flex h-[42px]">
        <button class="w-[30px] flex flex-col items-center pt-[2px]">
          <svg class="size-[18px]"><use href="#line"/></svg><span class="mt-px">直线</span>
          <svg class="w-[3px] h-[2px] mt-[3px]"><use href="#caret"/></svg>
        </button>
        <div class="grid grid-cols-2 grid-rows-3 w-[43px]">
          <button aria-label="圆弧" class="flex items-center gap-[4px]"><svg class="size-[10px]"><use href="#arc"/></svg><svg class="w-[3px] h-[2px]"><use href="#caret"/></svg></button>
          <button aria-label="点" class="flex items-center gap-[4px]"><svg class="size-[10px]"><use href="#points"/></svg><svg class="w-[3px] h-[2px]"><use href="#caret"/></svg></button>
          <button aria-label="圆" class="flex items-center gap-[4px]"><svg class="size-[10px]"><use href="#circle"/></svg><svg class="w-[3px] h-[2px]"><use href="#caret"/></svg></button>
          <button aria-label="椭圆" class="flex items-center gap-[4px]"><svg class="size-[10px]"><use href="#ellipse"/></svg><svg class="w-[3px] h-[2px]"><use href="#caret"/></svg></button>
          <button aria-label="矩形" class="flex items-center gap-[4px]"><svg class="size-[10px]"><use href="#rect"/></svg><svg class="w-[3px] h-[2px]"><use href="#caret"/></svg></button>
          <button aria-label="图案填充" class="flex items-center gap-[4px]"><svg class="size-[10px]"><use href="#hatch"/></svg><svg class="w-[3px] h-[2px]"><use href="#caret"/></svg></button>
        </div>
      </div>
      <div class="h-[11px] leading-[11px] text-center">绘图</div>
    </div>

    <!-- 修改 -->
    <div class="w-[86px] shrink-0 border-r border-[#2e3642] flex flex-col">
      <div class="flex h-[42px]">
        <button class="w-[24px] flex flex-col items-center pt-[2px]">
          <svg class="size-[18px]"><use href="#match"/></svg><span class="mt-px">特性<br />匹配</span>
        </button>
        <div class="flex-1 grid grid-rows-3 pl-px">
          <div class="flex items-center gap-[4px]">
            <button aria-label="移动"><svg class="size-[10px]"><use href="#move"/></svg></button><svg class="w-[3px] h-[2px]"><use href="#caret"/></svg>
            <button aria-label="旋转"><svg class="size-[10px]"><use href="#rotate"/></svg></button><svg class="w-[3px] h-[2px]"><use href="#caret"/></svg>
            <button aria-label="圆角"><svg class="size-[10px]"><use href="#fillet"/></svg></button><svg class="w-[3px] h-[2px]"><use href="#caret"/></svg>
          </div>
          <div class="flex items-center gap-[4px]">
            <button aria-label="删除"><svg class="size-[10px]"><use href="#erase"/></svg></button>
            <button aria-label="复制"><svg class="size-[10px]"><use href="#copy"/></svg></button>
            <button aria-label="镜像"><svg class="size-[10px]"><use href="#mirror"/></svg></button><svg class="w-[3px] h-[2px]"><use href="#caret"/></svg>
          </div>
          <div class="flex items-center gap-[4px]">
            <button aria-label="拉伸"><svg class="size-[10px]"><use href="#stretch"/></svg></button>
            <button aria-label="偏移"><svg class="size-[10px]"><use href="#offset"/></svg></button>
            <button aria-label="缩放"><svg class="size-[10px]"><use href="#scale"/></svg></button><svg class="w-[3px] h-[2px]"><use href="#caret"/></svg>
          </div>
        </div>
      </div>
      <button class="h-[11px] flex items-center justify-center gap-[3px]">修改<svg class="w-[4px] h-[3px]"><use href="#caret"/></svg></button>
    </div>

    <!-- 视图 -->
    <div class="w-[23px] shrink-0 border-r border-[#2e3642] flex flex-col">
      <div class="grid grid-rows-3 h-[42px] pl-[2px]">
        <button aria-label="视图方向" class="flex items-center gap-[4px]"><svg class="size-[10px]"><use href="#cube"/></svg><svg class="w-[3px] h-[2px]"><use href="#caret"/></svg></button>
        <button aria-label="视觉样式" class="flex items-center gap-[4px]"><svg class="size-[10px]"><use href="#shapes"/></svg><svg class="w-[3px] h-[2px]"><use href="#caret"/></svg></button>
        <button aria-label="显示配置" class="flex items-center gap-[4px]"><svg class="size-[10px]"><use href="#nodes"/></svg><svg class="w-[3px] h-[2px]"><use href="#caret"/></svg></button>
      </div>
      <div class="h-[11px] leading-[11px] text-center">视图</div>
    </div>

    <!-- 图层 -->
    <div class="w-[120px] shrink-0 border-r border-[#2e3642] flex flex-col">
      <div class="grid grid-rows-3 h-[42px] pl-[2px] pr-[4px] items-center">
        <div class="flex justify-between px-[2px]">
          <button aria-label="图层特性"><svg class="size-[10px]"><use href="#lyprops"/></svg></button>
          <button aria-label="置为当前"><svg class="size-[10px]"><use href="#lycur"/></svg></button>
          <button aria-label="匹配图层"><svg class="size-[10px]"><use href="#lycur"/></svg></button>
          <button aria-label="冻结"><svg class="size-[10px]"><use href="#lyfrz"/></svg></button>
          <button aria-label="关闭图层"><svg class="size-[10px]"><use href="#lyoff"/></svg></button>
          <button aria-label="隔离"><svg class="size-[10px]"><use href="#lyiso"/></svg></button>
          <button aria-label="上一个"><svg class="size-[10px]"><use href="#lyprev"/></svg></button>
          <button aria-label="图层状态"><svg class="size-[10px]"><use href="#lystack"/></svg></button>
        </div>
        <div class="relative h-[12px]">
          <select aria-label="图层状态" class="appearance-none w-full h-full bg-[#4b566b] pl-px"><option>未保存的图层状态</option></select>
          <svg class="absolute right-[2px] top-[4px] w-[5px] h-[3px]"><use href="#caret"/></svg>
        </div>
        <div class="relative flex items-center gap-[4px] h-[11px] bg-[#4b566b] border border-[#5c667a] pl-[2px]">
          <svg class="size-[8px]"><use href="#bulb"/></svg>
          <svg class="size-[8px]"><use href="#sun"/></svg>
          <svg class="size-[8px]"><use href="#lock"/></svg>
          <span class="size-[7px] bg-white"></span>
          <select aria-label="当前图层" class="appearance-none flex-1 h-full"><option>0</option></select>
          <svg class="absolute right-px top-[3px] w-[5px] h-[3px]"><use href="#caret"/></svg>
        </div>
      </div>
      <button class="h-[11px] flex items-center justify-center gap-[3px]">图层<svg class="w-[4px] h-[3px]"><use href="#caret"/></svg></button>
    </div>

    <!-- 注释 -->
    <div class="w-[71px] shrink-0 border-r border-[#2e3642] flex flex-col">
      <div class="flex h-[42px]">
        <button class="w-[32px] pl-px flex flex-col items-center">
          <span class="h-[21px] text-[22px] leading-[22px]">A</span><span>多行<br />文字</span>
        </button>
        <div class="grid grid-cols-2 grid-rows-3 w-[39px]">
          <button aria-label="标注" class="flex items-center gap-[4px]"><svg class="size-[10px]"><use href="#dim"/></svg><svg class="w-[3px] h-[2px]"><use href="#caret"/></svg></button>
          <button aria-label="修订云线" class="flex items-center gap-[4px]"><svg class="size-[10px]"><use href="#cloud"/></svg><svg class="w-[3px] h-[2px]"><use href="#caret"/></svg></button>
          <button aria-label="引线" class="flex items-center gap-[4px]"><svg class="size-[10px]"><use href="#leader"/></svg><svg class="w-[3px] h-[2px]"><use href="#caret"/></svg></button>
          <button aria-label="标高" class="flex items-center gap-[4px]"><svg class="size-[10px]"><use href="#elev"/></svg><svg class="w-[3px] h-[2px]"><use href="#caret"/></svg></button>
          <button aria-label="标记" class="flex items-center gap-[4px]"><svg class="size-[10px]"><use href="#tag"/></svg><svg class="w-[3px] h-[2px]"><use href="#caret"/></svg></button>
          <button aria-label="表格" class="flex items-center gap-[4px]"><svg class="size-[10px]"><use href="#table"/></svg><svg class="w-[3px] h-[2px]"><use href="#caret"/></svg></button>
        </div>
      </div>
      <button class="h-[11px] flex items-center justify-center gap-[3px]">注释<svg class="w-[4px] h-[3px]"><use href="#caret"/></svg></button>
    </div>

    <!-- 实用工具 -->
    <div class="w-[43px] shrink-0 border-r border-[#2e3642] flex flex-col">
      <div class="flex h-[42px]">
        <button class="w-[28px] flex flex-col items-center pt-[2px]">
          <svg class="w-[16px] h-[18px]"><use href="#ruler"/></svg><span class="mt-px">测量</span>
          <svg class="w-[3px] h-[2px] mt-[3px]"><use href="#caret"/></svg>
        </button>
        <div class="grid grid-rows-3">
          <button aria-label="粘贴"><svg class="size-[10px]"><use href="#paste"/></svg></button>
          <button aria-label="快速选择"><svg class="size-[10px]"><use href="#qsel"/></svg></button>
          <button aria-label="计算器"><svg class="size-[10px]"><use href="#calc"/></svg></button>
        </div>
      </div>
      <button class="h-[11px] flex items-center justify-center gap-[3px] whitespace-nowrap">实用工具<svg class="w-[4px] h-[3px]"><use href="#caret"/></svg></button>
    </div>

    <!-- 剖面和立面 -->
    <div class="w-[68px] shrink-0 border-r border-[#2e3642] flex flex-col">
      <div class="flex h-[42px]">
        <button class="w-[24px] flex flex-col items-center pt-[2px]">
          <svg class="w-[16px] h-[18px]"><use href="#house"/></svg><span class="mt-px">垂直<br />剖面</span>
        </button>
        <div class="flex-1 grid grid-rows-3 whitespace-nowrap">
          <button class="flex items-center gap-[3px]"><svg class="size-[9px]"><use href="#hsec"/></svg>水平剖面</button>
          <button class="flex items-center gap-[3px]"><svg class="size-[9px]"><use href="#secline"/></svg>剖面线</button>
          <button class="flex items-center gap-[3px]"><svg class="size-[9px]"><use href="#elevline"/></svg>立面线</button>
        </div>
      </div>
      <button class="h-[11px] flex items-center justify-center gap-[3px]">剖面和立面<svg class="w-[4px] h-[3px]"><use href="#caret"/></svg></button>
    </div>

    <!-- 详图 -->
    <div class="w-[24px] shrink-0 flex flex-col">
      <button class="h-[42px] flex flex-col items-center pt-[2px]">
        <svg class="size-[18px]"><use href="#detail"/></svg><span class="mt-px">详图<br />构件</span>
      </button>
      <div class="h-[11px] leading-[11px] text-center">详图</div>
    </div>
  </section>

  <!-- File tabs -->
  <div class="flex items-end h-[17px] shrink-0 pl-[12px] border-b-2 border-[#3b4453]">
    <button class="w-[72px] h-[12px] pl-[7px] text-left text-[#b8bec6] bg-[#2e3541] [clip-path:polygon(5px_0,calc(100%-5px)_0,100%_100%,0_100%)]">开始</button>
    <div class="w-[70px] h-[12px] pl-[4px] pr-[8px] flex items-center justify-between bg-[#3b4453] [clip-path:polygon(5px_0,calc(100%-5px)_0,100%_100%,0_100%)]">
      <button>Drawing1</button><button aria-label="关闭 Drawing1" class="text-[#a9b0b9]"><svg class="size-[6px]"><use href="#x"/></svg></button>
    </div>
    <button aria-label="新图形" class="w-[16px] h-[12px] flex items-center justify-center bg-[#2e3541] text-[#a9b0b9] ml-px [clip-path:polygon(2px_0,calc(100%-2px)_0,100%_100%,0_100%)]"><svg class="size-[6px]"><use href="#plus"/></svg></button>
  </div>

  <!-- Drawing area -->
  <main class="relative flex-1 bg-[#212830] overflow-hidden">
    <svg class="absolute inset-0 w-full h-full">
      <defs>
        <pattern id="snap" x="24" y="114" width="135" height="135" patternUnits="userSpaceOnUse">
          <path d="M27.500 0v135M54.500 0v135M81.500 0v135M108.500 0v135M0 27.500h135M0 54.500h135M0 81.500h135M0 108.500h135" stroke="#242c36"/>
          <path d="M.5 0v135M0 .5h135" stroke="#2c3440"/>
        </pattern>
      </defs>
      <rect width="100%" height="100%" fill="url(#snap)"/>
      <path d="M159.500 0v1000" stroke="#23602c"/>
      <!-- crosshair -->
      <path d="M368 180h25M398 180h25M395.500 153v25M395.500 182v25" stroke="#d5d7da"/>
      <path d="M393.500 178h4v4h-4z" fill="none" stroke="#d5d7da"/>
      <!-- UCS icon -->
      <path d="M12.500 426v28h29M10 451.500h5v5h-5zM43 446l8 8M51 446l-8 8M13 416l4 4 4-4M17 420v4" fill="none" stroke="#b4b8bd"/>
    </svg>

    <!-- Tool palette -->
    <section class="absolute left-[2px] top-px w-[136px] h-[182px] flex">
      <div class="w-[14px] bg-[#2d3440] flex flex-col items-center pt-[3px] pb-[2px] gap-[4px] text-[#c3c8ce]">
        <button aria-label="关闭"><svg class="size-[7px]"><use href="#x"/></svg></button>
        <button aria-label="自动隐藏"><svg class="size-[7px]"><use href="#pin"/></svg></button>
        <button aria-label="特性"><svg class="size-[7px]"><use href="#gear"/></svg></button>
        <h2 class="mt-auto [writing-mode:vertical-rl] [text-orientation:sideways] rotate-180">工具选项板 - 设计</h2>
        <svg class="size-[9px]"><use href="#palette"/></svg>
      </div>
      <div class="w-[110px] mt-px bg-[#3b4453] flex pt-[3px] pl-[3px] pb-[3px]">
        <div class="w-[2px] h-[57px] bg-[#2b323e]"></div>
        <ul class="flex-1 pl-[6px] flex flex-col [&>li]:flex-1 [&>li]:flex [&>li]:items-center [&>li]:gap-[3px] [&_svg]:size-[13px]">
          <li><svg viewBox="0 0 12 12"><path d="M1 1l10 0v9L1 11.500z" fill="#b4b5b6"/></svg>墙</li>
          <li><svg viewBox="0 0 12 12"><path d="M2 1h2v10H2zM9 2h2v9H9z" fill="#7c828a"/><path d="M4 1l5 1.500V12l-5-1z" fill="#dcdcdc"/></svg>门</li>
          <li><svg viewBox="0 0 12 12"><path d="M4 1l5-.5V11l-5 .5z" fill="#33363a" stroke="#b9b9b7"/></svg>窗</li>
          <li><svg viewBox="0 0 12 12"><path d="M1 2l5-1 5 1v8l-5 1-5-1zM6 1v10" fill="#2d333d" stroke="#1b1f25"/></svg>角窗</li>
          <li><svg viewBox="0 0 12 12"><path d="M1 2l5-1v10l-5-.5z" fill="#15171a" stroke="#8d8f91"/><path d="M7.500 1.500h3v9h-3z" fill="#3c4149" stroke="#d6d6d6"/></svg>门窗组合</li>
          <li><svg viewBox="0 0 12 12"><path d="M1 2l10-1v10H9V4L5 4.500V12H1z" fill="#dededf"/></svg>洞口</li>
          <li><svg viewBox="0 0 12 12"><path d="M2 2l8-1v9l-8 1.500zM6 1.500V11M2 6l8-1" fill="#33383c" stroke="#5d6262"/></svg>幕墙</li>
          <li><svg viewBox="0 0 12 12"><path d="M5 1h3v10.500H5z" fill="#7d8288"/><path d="M5 1h1.500v10.500H5z" fill="#d0d1d2"/></svg>柱</li>
          <li><svg viewBox="0 0 12 12"><path d="M0 1h8v2L6 4v4l3 1v2H1V9l2-1V4L0 3z" fill="#eceded"/><path d="M7 8h3v3H7z" fill="#3f8fd0"/><path d="M9 8c3 0 3 4 0 4" stroke="#d56a3a" stroke-width="1.500" fill="none"/></svg>自定义柱</li>
          <li><svg viewBox="0 0 12 12"><path d="M0 2l3-.5L12 8v3H9z" fill="#a7a8aa"/><path d="M0 2l3-.5L12 8l-3 1z" fill="#e5e5e5"/></svg>梁</li>
        </ul>
      </div>
      <div class="w-[12px] mt-px h-[170px] flex flex-col text-[#aeb5be] [&>button]:h-[27px] [&>button]:flex [&>button]:items-center [&>button]:justify-center [&>button]:border-b [&>button]:border-[#222933] [&_span]:[writing-mode:vertical-rl] [&_span]:[text-orientation:sideways] [&_span]:rotate-180">
        <button class="bg-[#3b4453] text-[#dcdfe3]"><span>设计</span></button>
        <button class="bg-[#2d3440]"><span>墙</span></button>
        <button class="bg-[#2d3440]"><span>门</span></button>
        <button class="bg-[#2d3440]"><span>窗</span></button>
        <button class="bg-[#2d3440]"><span>角窗</span></button>
        <button class="bg-[#2d3440]"><span>空间</span></button>
        <span class="flex-1 bg-[#2d3440]"></span>
      </div>
    </section>

    <!-- Properties palette -->
    <section class="absolute left-[2px] top-[188px] w-[136px] h-[193px] flex">
      <div class="w-[14px] bg-[#2d3440] flex flex-col items-center pt-px pb-px gap-[4px] text-[#c3c8ce]">
        <button aria-label="关闭"><svg class="size-[7px]"><use href="#x"/></svg></button>
        <button aria-label="自动隐藏"><svg class="size-[7px]"><use href="#pin"/></svg></button>
        <button aria-label="特性"><svg class="size-[7px]"><use href="#gear"/></svg></button>
        <h2 class="mt-auto [writing-mode:vertical-rl] [text-orientation:sideways] rotate-180">特性</h2>
        <svg class="size-[9px]"><use href="#props"/></svg>
      </div>
      <div class="w-[110px] bg-[#3b4453] flex pl-[3px] pr-[8px] overflow-hidden">
        <div class="w-[2px] h-[84px] mt-[22px] bg-[#2b323e]"></div>
        <div class="flex-1 pl-[6px] pt-[8px]">
          <div class="flex items-center gap-[4px] h-[12px] mb-px">
            <div class="relative w-[50px] h-full">
              <select aria-label="选择对象" class="appearance-none w-full h-full bg-[#4b566b] pl-[2px]"><option>无选择</option></select>
              <svg class="absolute right-[2px] top-[5px] w-[5px] h-[3px]"><use href="#caret"/></svg>
            </div>
            <button aria-label="添加选择"><svg class="size-[10px]"><use href="#addsel"/></svg></button>
            <button aria-label="选择对象"><svg class="size-[10px]"><use href="#qsel"/></svg></button>
            <button aria-label="快速选择"><svg class="size-[10px]"><use href="#paste"/></svg></button>
          </div>
          <button class="w-full h-[12px] bg-[#2a313c] px-[4px] flex items-center justify-between font-bold text-white">常规<svg class="w-[5px] h-[3px]"><use href="#caret"/></svg></button>
          <table class="w-[82px] ml-[9px] mb-[2px] table-fixed border-collapse [&_tr]:h-[12px] [&_th]:w-[43px] [&_th]:font-normal [&_th]:text-left [&_th]:pl-[4px] [&_td]:pl-px [&_td]:border-l [&_td]:whitespace-nowrap [&_tr]:border-b [&_tr]:border-[#333b48] [&_td]:border-[#333b48]">
            <tr><th>颜色</th><td><span class="flex items-center gap-[4px]"><i class="size-[7px] bg-white"></i>ByLa...</span></td></tr>
            <tr><th>图层</th><td>0</td></tr>
            <tr><th>线型</th><td><span class="flex items-center gap-[3px]"><i class="w-[15px] h-px bg-[#b9bec5]"></i>By...</span></td></tr>
            <tr><th>线型比例</th><td>1.00</td></tr>
            <tr><th>线宽</th><td><span class="flex items-center gap-[3px]"><i class="w-[15px] h-px bg-[#b9bec5]"></i>By...</span></td></tr>
            <tr><th>透明度</th><td>ByLayer</td></tr>
            <tr><th>厚度</th><td>0.00</td></tr>
          </table>
          <button class="w-full h-[11px] bg-[#2a313c] px-[4px] flex items-center justify-between font-bold text-white">三维效果<svg class="w-[5px] h-[3px]"><use href="#caret"/></svg></button>
          <table class="w-[82px] ml-[9px] mb-[2px] table-fixed border-collapse [&_tr]:h-[12px] [&_th]:w-[43px] [&_th]:font-normal [&_th]:text-left [&_th]:pl-[4px] [&_td]:pl-px [&_td]:border-l [&_td]:whitespace-nowrap [&_tr]:border-b [&_tr]:border-[#333b48] [&_td]:border-[#333b48]">
            <tr><th>材质</th><td>ByLayer</td></tr>
          </table>
          <button class="w-full h-[11px] bg-[#2a313c] px-[4px] flex items-center justify-between font-bold text-white">打印样式<svg class="w-[5px] h-[3px]"><use href="#caret"/></svg></button>
          <table class="w-[82px] ml-[9px] table-fixed border-collapse [&_tr]:h-[12px] [&_th]:w-[43px] [&_th]:font-normal [&_th]:text-left [&_th]:pl-[4px] [&_td]:pl-px [&_td]:border-l [&_td]:whitespace-nowrap [&_tr]:border-b [&_tr]:border-[#333b48] [&_td]:border-[#333b48]">
            <tr><th>打印样式</th><td>ByLayer</td></tr>
            <tr><th>打印样式表</th><td>Aec Stan...</td></tr>
            <tr><th>打印表附...</th><td class="text-[#8b939e]">模型</td></tr>
          </table>
        </div>
      </div>
      <div class="w-[12px] flex flex-col text-[#aeb5be] [&>button]:h-[61px] [&>button]:flex [&>button]:items-center [&>button]:justify-center [&>button]:border-b [&>button]:border-[#222933] [&_span]:[writing-mode:vertical-rl] [&_span]:[text-orientation:sideways] [&_span]:rotate-180">
        <button class="bg-[#3b4453] text-[#dcdfe3]"><span>设计</span></button>
        <button class="bg-[#2d3440]"><span>显示</span></button>
        <button class="bg-[#2d3440]"><span>扩展数据</span></button>
      </div>
    </section>

    <!-- Style browser -->
    <section class="absolute right-[167px] top-[13px] w-[235px] h-[392px] flex bg-[#2f3744]">
      <div class="w-[13px] bg-[#2d3440] flex flex-col items-center pt-[2px] pb-px gap-[4px] text-[#c3c8ce]">
        <button aria-label="关闭"><svg class="size-[7px]"><use href="#x"/></svg></button>
        <button aria-label="自动隐藏"><svg class="size-[7px]"><use href="#pin"/></svg></button>
        <button aria-label="特性"><svg class="size-[7px]"><use href="#gear"/></svg></button>
        <h2 class="mt-auto [writing-mode:vertical-rl] [text-orientation:sideways] rotate-180">样式浏览器</h2>
        <svg class="size-[9px]"><use href="#broom"/></svg>
      </div>
      <div class="flex-1 flex flex-col bg-[#3b4453] mt-px mb-[2px] mr-[2px] ml-px pt-[4px] pl-[6px] pr-[5px]">
        <form class="grid grid-cols-[74px_118px_1fr] auto-rows-[13px] gap-[3px] [&_label]:text-right">
          <label for="objType">对象类型</label>
          <div class="relative"><select id="objType" class="appearance-none w-full h-full bg-[#4b566b] border border-[#566075] px-[2px]"><option>墙</option></select><svg class="absolute right-[2px] top-[5px] w-[5px] h-[3px]"><use href="#caret"/></svg></div>
          <button type="button" aria-label="帮助" class="self-center"><svg class="size-[9px]"><use href="#help"/></svg></button>
          <label for="dwgSource">图形源</label>
          <div class="relative"><select id="dwgSource" class="appearance-none w-full h-full bg-[#4b566b] border border-[#566075] px-px"><option>内容构件库图形</option></select><svg class="absolute right-[2px] top-[5px] w-[5px] h-[3px]"><use href="#caret"/></svg></div>
          <span></span>
          <label for="dwgFile">图形文件</label>
          <div class="relative"><select id="dwgFile" class="appearance-none w-full h-full bg-[#4b566b] border border-[#566075] px-px"><option>所有图形</option></select><svg class="absolute right-[2px] top-[5px] w-[5px] h-[3px]"><use href="#caret"/></svg></div>
          <span></span>
          <div class="relative col-start-2 text-[#7d8696]"><input type="text" aria-label="搜索样式" placeholder="搜索样式" class="w-full h-full border border-[#5b657a] bg-[#4b566b] px-[3px] italic placeholder:text-[#aab1bd] outline-none" /><svg class="absolute right-[2px] top-[3px] size-[8px]" viewBox="0 0 12 12"><circle cx="5" cy="5" r="4" fill="none" stroke="currentColor" stroke-width="1.300"/><path d="M8 8l4 4" stroke="currentColor" stroke-width="1.300"/></svg></div>
        </form>
        <button aria-label="折叠" class="h-[12px] flex justify-center items-center"><svg class="w-[4px] h-[3px] rotate-180"><use href="#caret"/></svg></button>
        <div class="flex items-center h-[14px] shrink-0 bg-[#222933] px-[2px] gap-[4px] text-[#3a7a52]">
          <svg class="size-[8px]"><use href="#arrow"/></svg>
          <svg class="size-[8px]"><use href="#plus"/></svg>
          <svg class="size-[8px]"><use href="#brush"/></svg>
          <button aria-label="视图" class="flex items-center gap-[4px] ml-auto"><svg class="size-[8px]"><use href="#tiles"/></svg><svg class="w-[4px] h-[3px]"><use href="#caret"/></svg></button>
          <button aria-label="方向" class="flex items-center gap-[4px] ml-px"><svg class="size-[9px]"><use href="#cube"/></svg><svg class="w-[4px] h-[3px]"><use href="#caret"/></svg></button>
          <button aria-label="视觉样式" class="flex items-center gap-[4px]"><svg class="size-[9px]"><use href="#wheel"/></svg><svg class="w-[4px] h-[3px]"><use href="#caret"/></svg></button>
        </div>
        <div class="flex-1 min-h-0 flex overflow-hidden border-l border-b border-[#323a47]">
          <ul class="grid grid-cols-[74px_74px] grid-rows-8 gap-x-[12px] h-[332px] pl-[7px] pt-[3px] [&_svg]:w-[74px] [&_svg]:h-[27px] [&_li]:whitespace-nowrap">
            <li><svg><use href="#thumb"/></svg>Standard</li>
            <li><svg><path d="M5 26L29 1M44 26L67 1" stroke="#a3692f"/><use href="#thumb"/></svg>Brick-090</li>
            <li><svg><rect width="74" height="27" fill="url(#h13)"/><path d="M10 10h55v5H10z" fill="#3b4453"/><path d="M0 15.500h74M10.500 15V10.500h54V15" stroke="#c9656d" fill="none"/><use href="#thumb"/></svg>Brick-090 Air-050 Bri...</li>
            <li><svg><rect width="74" height="21" fill="url(#h13)"/><path d="M8 8h58v5H8z" fill="#3b4453"/><path d="M0 13.500h8V8.500h58v4h8M0 21.500h74M0 24.500h74" stroke="#b0555f" fill="none"/><use href="#thumb"/></svg>Brick-090 Air-050 Bri...</li>
            <li><svg><rect width="74" height="27" fill="url(#h27)"/><path d="M0 13.500h74" stroke="#c9656d"/><use href="#thumb"/></svg>Brick-090 Brick-090</li>
            <li><svg><rect width="74" height="22" fill="url(#h16)"/><path d="M0 10.500h74M0 21.500h74M0 24.500h74" stroke="#b0555f"/><use href="#thumb"/></svg>Brick-090 Brick-090...</li>
            <li><svg><path d="M3 17L19 1M28 17L44 1M56 17L72 1" stroke="#a3692f"/><path d="M0 17.500h74M0 22.500h74" stroke="#b0555f"/><use href="#thumb"/></svg>Brick-090 Furring</li>
            <li><svg><rect width="74" height="27" fill="url(#h13)"/><path d="M8 9h58v4H8zM2 13h70v4H2z" fill="#3b4453"/><path d="M8.500 13V8.500h58V13M0 13.500h74M0 17.500h74" stroke="#c9656d" fill="none"/><path d="M5 15.500h67" stroke="#e08431" stroke-width="4" stroke-dasharray="1 4"/><use href="#thumb"/></svg>Brick-090 Rigid-038...</li>
            <li><svg><rect width="74" height="22" fill="url(#h13)"/><path d="M7 7h60v4H7zM2 11h70v4H2z" fill="#3b4453"/><path d="M7.500 11V7.500h60V11M0 11.500h74M0 15.500h74M0 21.500h74M0 24.500h74" stroke="#c9656d" fill="none"/><path d="M5 13.500h67" stroke="#e08431" stroke-width="4" stroke-dasharray="1 3"/><use href="#thumb"/></svg>Brick-090 Rigid-038...</li>
            <li><svg><rect width="74" height="27" fill="url(#h16)"/><use href="#thumb"/></svg>Brick-X</li>
            <li><svg><rect width="74" height="22" fill="url(#h13)"/><path d="M0 21.500h74M0 24.500h74" stroke="#c9656d"/><use href="#thumb"/></svg>Brick-X Furring</li>
            <li><svg><use href="#thumbg"/></svg>Bulkhead-X @ 300</li>
            <li><svg><use href="#thumbg"/></svg>Bulkhead-X @ 450</li>
            <li><svg><use href="#thumbg"/></svg>Bulkhead-X @ 600</li>
            <li><svg><use href="#thumb"/></svg></li>
            <li><svg><use href="#thumb"/></svg></li>
          </ul>
          <div class="ml-auto mr-px w-[7px] bg-[#757c87] flex flex-col items-center py-[4px]">
            <svg class="w-[5px] h-[4px] rotate-180" viewBox="0 0 6 4"><path d="M0 0h6L3 4z" fill="#3b4453"/></svg>
            <span class="w-[5px] h-[23px] mt-[3px] rounded bg-[#3f4754]"></span>
            <svg class="w-[5px] h-[4px] mt-auto" viewBox="0 0 6 4"><path d="M0 0h6L3 4z" fill="#3b4453"/></svg>
          </div>
        </div>
      </div>
    </section>

    <!-- Viewport controls and ViewCube -->
    <div class="absolute right-[7px] top-[5px] flex gap-[4px] text-[#e3e5e7]">
      <button aria-label="最小化"><svg class="size-[7px]" viewBox="0 0 7 7"><path d="M.5 4.500h6V6h-6z" fill="currentColor"/></svg></button>
      <button aria-label="还原"><svg class="size-[7px]" viewBox="0 0 7 7"><path d="M1 2.500h4V6H1zM2.500 2.500V1H6v3.500H5" stroke="currentColor" fill="none"/></svg></button>
      <button aria-label="关闭"><svg class="size-[7px]"><use href="#x"/></svg></button>
    </div>
    <svg class="absolute right-[8px] top-[16px] w-[80px] h-[106px]" viewBox="0 0 80 106">
      <circle cx="40" cy="44" r="30.500" fill="none" stroke="#444b55" stroke-width="7"/>
      <path d="M26 29.500h29v29H26z" fill="#a9acae" stroke="#b6b8ba"/>
      <path d="M31 34h19v19H31z" fill="#9faab0"/>
      <g fill="#abafb5" text-anchor="middle" class="text-[11px]">
        <text x="40" y="16">北</text>
        <text x="40" y="80">南</text>
        <text x="8" y="48">西</text>
        <text x="72" y="48">东</text>
      </g>
      <text x="40" y="49" text-anchor="middle" fill="#5a6167" class="text-[15px]">上</text>
      <rect x="27" y="93" width="27" height="10" rx="2" fill="#9497a6"/>
      <text x="29" y="100" fill="#4d5260">WCS</text>
      <path d="M46.500 97h5" stroke="#757a89"/>
    </svg>

    <!-- Command line -->
    <div class="absolute left-[217px] right-[217px] bottom-0 h-[15px] flex items-center bg-[#262d38] text-[#b4bac2]">
      <svg class="w-[4px] h-[9px] ml-px" viewBox="0 0 4 9"><path d="M1 0v9M3 0v9" stroke="currentColor" stroke-dasharray="1 1"/></svg>
      <button aria-label="关闭命令行" class="ml-[2px]"><svg class="size-[6px]"><use href="#x"/></svg></button>
      <button aria-label="自定义" class="ml-[6px]"><svg class="size-[9px]"><use href="#wrench"/></svg></button>
      <div class="flex-1 ml-[3px] h-[14px] bg-[#bcbec0] flex items-center pl-[2px]">
        <svg class="w-[9px] h-[7px]" viewBox="0 0 9 7"><path d="M.5.5h8v6h-8zM.5 1.500h8M2 3l1.500 1L2 5" stroke="#5b616a" fill="none"/></svg>
        <svg class="w-[4px] h-[3px] ml-px" viewBox="0 0 6 4"><path d="M0 0h6L3 4z" fill="#5b616a"/></svg>
        <input type="text" aria-label="命令" placeholder="键入命令" class="flex-1 h-full ml-[4px] italic placeholder:text-[#6d7178] outline-none" />
        <svg class="w-[4px] h-[3px] mr-[2px]" viewBox="0 0 6 4"><path d="M0 4h6L3 0z" fill="#5b616a"/></svg>
      </div>
    </div>
  </main>

  <!-- Layout tabs and status bar -->
  <footer class="flex items-start h-[17px] shrink-0 border-t border-[#3f4753] bg-[#222933]">
    <div class="flex ml-[6px] text-[#aab1ba]">
      <button class="w-[28px] h-[10px] bg-[#3b4453] font-bold text-white [clip-path:polygon(0_0,100%_0,calc(100%-4px)_100%,4px_100%)]">模型</button>
      <button class="w-[30px] h-[10px] bg-[#2e3541] [clip-path:polygon(0_0,100%_0,calc(100%-4px)_100%,4px_100%)]">Work</button>
      <button aria-label="新建布局" class="w-[16px] h-[10px] flex items-center justify-center bg-[#2e3541] [clip-path:polygon(0_0,100%_0,calc(100%-4px)_100%,4px_100%)]"><svg class="size-[6px]"><use href="#plus"/></svg></button>
    </div>
    <div class="ml-auto w-[580px] h-[14px] mr-px flex justify-between [&>*]:h-full [&>*]:flex [&>*]:items-center [&>*]:justify-center [&>*]:bg-[#2e3643] text-[#e3e5e7] whitespace-nowrap">
      <span class="w-[84px]">26234.25, 37726.05, 0.00</span>
      <button class="w-[17px]">模型</button>
      <button aria-label="栅格" class="w-[12px] bg-[#4c86bf]!"><svg class="size-[9px]"><use href="#hash"/></svg></button>
      <button aria-label="捕捉" class="w-[12px] bg-[#4c86bf]!"><svg class="size-[9px]"><use href="#dots"/></svg></button>
      <button aria-label="捕捉设置" class="w-[9px]"><svg class="w-[4px] h-[3px]"><use href="#caret"/></svg></button>
      <button aria-label="动态输入" class="w-[12px] bg-[#4c86bf]!"><svg class="size-[9px]"><use href="#dyn"/></svg></button>
      <button aria-label="正交" class="w-[12px]"><svg class="size-[9px]"><use href="#ortho"/></svg></button>
      <button aria-label="极轴" class="w-[12px] bg-[#4c86bf]!"><svg class="size-[9px]"><use href="#polar"/></svg></button>
      <button aria-label="极轴设置" class="w-[9px]"><svg class="w-[4px] h-[3px]"><use href="#caret"/></svg></button>
      <button aria-label="对象追踪" class="w-[12px] bg-[#4c86bf]!"><svg class="size-[9px]"><use href="#otrack"/></svg></button>
      <button aria-label="对象捕捉" class="w-[12px] bg-[#4c86bf]!"><svg class="size-[10px]"><use href="#osnap"/></svg></button>
      <button aria-label="对象捕捉设置" class="w-[9px]"><svg class="w-[4px] h-[3px]"><use href="#caret"/></svg></button>
      <button aria-label="线宽" class="w-[14px]"><svg class="size-[9px]"><use href="#lwt"/></svg></button>
      <button aria-label="选择循环" class="w-[14px]"><svg class="size-[9px]"><use href="#cycle"/></svg></button>
      <button aria-label="注释可见性" class="w-[12px] bg-[#4c86bf]!"><svg class="size-[10px]"><use href="#annstar"/></svg></button>
      <button aria-label="自动缩放" class="w-[12px] bg-[#4c86bf]!"><svg class="size-[10px]"><use href="#annstar"/></svg></button>
      <button class="w-[41px] gap-[3px]"><svg class="size-[9px]"><use href="#ann"/></svg>1:100<svg class="w-[4px] h-[3px]"><use href="#caret"/></svg></button>
      <button aria-label="工作空间" class="w-[21px] gap-[4px]"><svg class="size-[9px]"><use href="#gear"/></svg><svg class="w-[4px] h-[3px]"><use href="#caret"/></svg></button>
      <button aria-label="注释监视器" class="w-[12px]"><svg class="size-[9px]" viewBox="0 0 12 12"><path d="M6 0v12M0 6h12" stroke="currentColor" stroke-width="1.300"/></svg></button>
      <button class="w-[54px] gap-[2px]">Medium Detail<svg class="w-[4px] h-[3px]"><use href="#caret"/></svg></button>
      <button class="w-[45px] gap-[4px]"><svg class="size-[9px]"><use href="#db"/></svg>1400.00</button>
      <button class="w-[36px] gap-[4px]"><svg class="size-[9px]"><use href="#surf"/></svg>+0.00</button>
      <button aria-label="过滤" class="w-[14px]"><svg class="size-[9px]"><use href="#filter"/></svg></button>
      <button aria-label="图形性能" class="w-[12px] bg-[#4c86bf]!"><svg class="size-[9px]"><use href="#solid"/></svg></button>
      <button aria-label="隔离对象" class="w-[14px]"><svg class="size-[9px]"><use href="#iso"/></svg></button>
      <button aria-label="全屏" class="w-[14px]"><svg class="size-[10px]"><use href="#full"/></svg></button>
      <button aria-label="自定义" class="w-[12px]"><svg class="size-[9px]" viewBox="0 0 9 9"><path d="M0 1h9M0 4.500h9M0 8h9" stroke="currentColor"/></svg></button>
    </div>
  </footer>

</body>
</html>
